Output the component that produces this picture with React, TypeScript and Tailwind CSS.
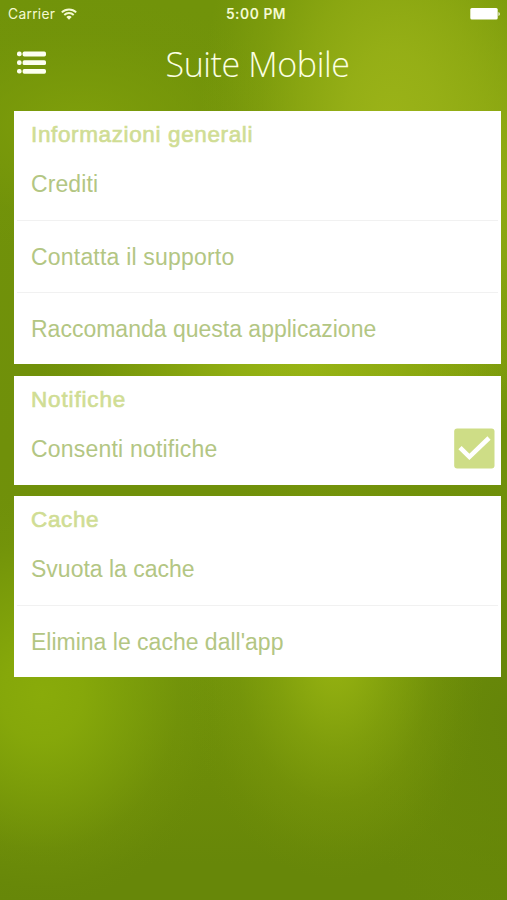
import type { ReactNode } from "react";

function StatusBar() {
  return (
    <div className="grid h-7 grid-cols-3 items-center pr-[6px] pl-2 text-[#f4fad2]">
      <div className="flex items-center gap-[6px]">
        <span className="font-[Inter,sans-serif] text-[13.8px] tracking-[0.3px]">Carrier</span>
        <svg width="16" height="12" viewBox="0 0 16 12" fill="none" stroke="currentColor" strokeWidth="1.9">
          <path d="M.8 4.4a10.3 10.3 0 0 1 14.4 0" />
          <path d="M3.3 7a6.7 6.7 0 0 1 9.4 0" />
          <path d="M8 11.8 5.3 9a3.9 3.9 0 0 1 5.4 0Z" fill="currentColor" stroke="none" />
        </svg>
      </div>
      <div className="pl-[3px] text-center font-[Inter,sans-serif] text-[13.8px] font-semibold tracking-[0.55px]">5:00 PM</div>
      <svg className="justify-self-end" width="31" height="12" viewBox="0 0 31 12" fill="#fff">
        <rect x="0.3" y="0" width="27.4" height="11.6" rx="1.5" />
        <path d="M28.5 4a2.2 2.2 0 0 1 0 4Z" />
      </svg>
    </div>
  );
}

function MenuIcon() {
  return (
    <svg width="30" height="24" viewBox="0 0 30 24" fill="#fdfff0">
      {[0, 8.7, 17.4].map((y) => (
        <g key={y}>
          <rect x="0" y={y + 0.6} width="4.6" height="4.6" rx="2" />
          <rect x="5.6" y={y + 0.6} width="23.4" height="4.8" rx="1.7" />
        </g>
      ))}
    </svg>
  );
}

function Card({ title, children }: { title: ReactNode; children: ReactNode }) {
  return (
    <section className="bg-white">
      <h2 className="h-[37px] pt-[10px] pl-[17.5px] text-[22.5px] leading-[28px] font-normal tracking-[0.63px] text-[#d0dd94] [-webkit-text-stroke:0.65px_#d0dd94]">
        {title}
      </h2>
      <div className="mx-[3px]">{children}</div>
    </section>
  );
}

function Row({ label, spacing = "tracking-normal", children }: { label: string; spacing?: string; children?: ReactNode }) {
  return (
    <div className="flex h-[72px] items-center justify-between border-[#f1f1f1] pr-[3px] pl-[14.5px] text-[23px] leading-[28px] text-[#b3c683] not-first:border-t">
      <span className={spacing}>{label}</span>
      {children}
    </div>
  );
}

function Checkbox() {
  return (
    <svg className="-mt-px" width="41" height="41" viewBox="0 0 41 41">
      <rect x="0.2" y="0.4" width="40.3" height="40" rx="3" fill="#cedd86" />
      <path d="m6 19.6 9.4 9.3L35 10" fill="none" stroke="#fff" strokeWidth="4.6" />
    </svg>
  );
}

export default function App() {
  return (
    <main className="h-[900px] w-[507px] overflow-hidden bg-[#6f8f08] bg-[radial-gradient(ellipse_190px_330px_at_390px_130px,#9bb318_0%,#98b117e6_25%,#94ae14b3_48%,#8faa1166_70%,#8ba60e1f_90%,#8ba60d00_100%),radial-gradient(ellipse_150px_210px_at_480px_180px,#8ea914_0%,#8ea914b3_40%,#8ea9144d_75%,#8ea91400_100%),radial-gradient(ellipse_270px_100px_at_310px_365px,#9ab716_0%,#97b414cc_30%,#93b01180_55%,#8fac1026_82%,#8fac1000_100%),radial-gradient(ellipse_150px_220px_at_335px_660px,#94b110_0%,#91ae10e6_15%,#8ba80e99_40%,#839f0c4d_65%,#7b970a17_88%,#70900800_100%),radial-gradient(ellipse_185px_210px_at_42px_695px,#89ab0a_0%,#88aa0ae6_22%,#84a60a99_48%,#7b9b0a40_74%,#7494080f_92%,#70900800_100%),radial-gradient(ellipse_220px_130px_at_80px_125px,#7f9f0b_0%,#7c9c0aaa_35%,#7696093d_72%,#70900800_100%),radial-gradient(ellipse_150px_260px_at_507px_720px,#658509_0%,#668608a6_45%,#69890840_75%,#70900800_100%),linear-gradient(#71930a_0%,#70900a_50%,#70920a_75%,#6c8b08_87%,#678709_96%,#678709_100%)] font-['Liberation_Sans',Arial,sans-serif]">
      <StatusBar />
      <header className="grid h-[83px] grid-cols-[64px_1fr_64px] items-start">
        <div className="pt-[23px] pl-[17px]">
          <MenuIcon />
        </div>
        <h1 className="pt-[12px] pl-[8px] text-center font-['Open_Sans',sans-serif] text-[34px] leading-[48px] font-light tracking-[-0.4px] text-[#fbffe2]">
          Suite Mobile
        </h1>
      </header>
      <div className="flex flex-col gap-[11.5px] pr-[6px] pl-[13.5px]">
        <Card title="Informazioni generali">
          <Row label="Crediti" spacing="tracking-[0.1px]" />
          <Row label="Contatta il supporto" spacing="tracking-[0.2px]" />
          <Row label="Raccomanda questa applicazione" />
        </Card>
        <Card title={<span className="tracking-[0.85px]">Notifiche</span>}>
          <Row label="Consenti notifiche" spacing="tracking-[0.2px]">
            <Checkbox />
          </Row>
        </Card>
        <Card title="Cache">
          <Row label="Svuota la cache" />
          <Row label="Elimina le cache dall'app" />
        </Card>
      </div>
    </main>
  );
}
